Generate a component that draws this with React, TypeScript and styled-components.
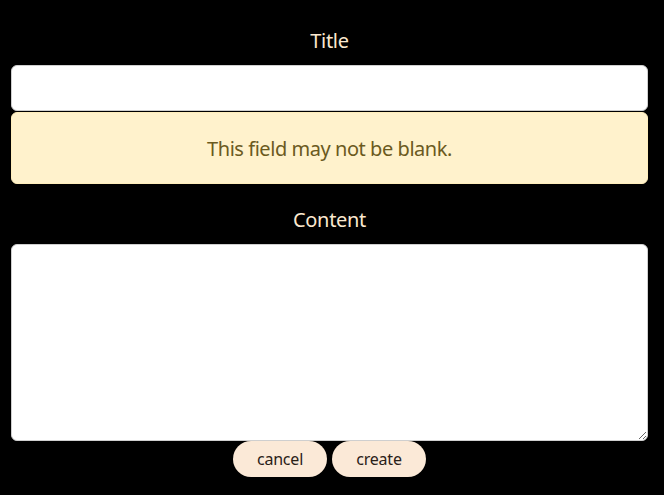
import React from "react";
import styled, { createGlobalStyle } from "styled-components";

const Global = createGlobalStyle`
  html, body { margin: 0; padding: 0; background: #000; }
  body { font-family: "Noto Sans", "Open Sans", sans-serif; }
`;

const Form = styled.form`
  display: flex;
  flex-direction: column;
  padding: 28px 16px 0 11px;
`;

const Label = styled.label<{ $mt?: number }>`
  display: block;
  text-align: center;
  color: #fbe8cf;
  font-size: 20px;
  line-height: 26px;
  margin-top: ${(p) => p.$mt ?? 0}px;
  margin-bottom: 11px;
  letter-spacing: -0.3px;
`;

const Input = styled.input`
  box-sizing: border-box;
  width: 100%;
  height: 46px;
  border: 1px solid #cfcfcf;
  border-radius: 6px;
  background: #fff;
  margin: 0;
  outline: none;
`;

const Alert = styled.div`
  box-sizing: border-box;
  height: 72px;
  margin-top: 1px;
  background: #fff2cc;
  border: 1px solid #ffeebb;
  border-radius: 6px;
  color: #6b5a1e;
  font-size: 20px;
  letter-spacing: -0.45px;
  display: flex;
  align-items: center;
  justify-content: center;
`;

const TextArea = styled.textarea`
  box-sizing: border-box;
  width: 100%;
  height: 197px;
  border: 1px solid #cfcfcf;
  border-radius: 6px;
  background: #fff;
  margin: 0;
  display: block;
  outline: none;
`;

const Actions = styled.div`
  display: flex;
  justify-content: center;
  gap: 5px;
  margin-top: 0;
`;

const Button = styled.button`
  width: 94px;
  height: 36px;
  border: none;
  border-radius: 18px;
  background: #fbe9d7;
  color: #2a2118;
  font-family: "Noto Sans", "Open Sans", sans-serif;
  font-size: 16px;
  letter-spacing: -0.2px;
  padding: 0;
`;

export default function App() {
  return (
    <>
      <Global />
      <Form onSubmit={(e) => e.preventDefault()}>
        <Label>Title</Label>
        <Input type="text" />
        <Alert>This field may not be blank.</Alert>
        <Label $mt={23}>Content</Label>
        <TextArea />
        <Actions>
          <Button type="button">cancel</Button>
          <Button type="submit">create</Button>
        </Actions>
      </Form>
    </>
  );
}
